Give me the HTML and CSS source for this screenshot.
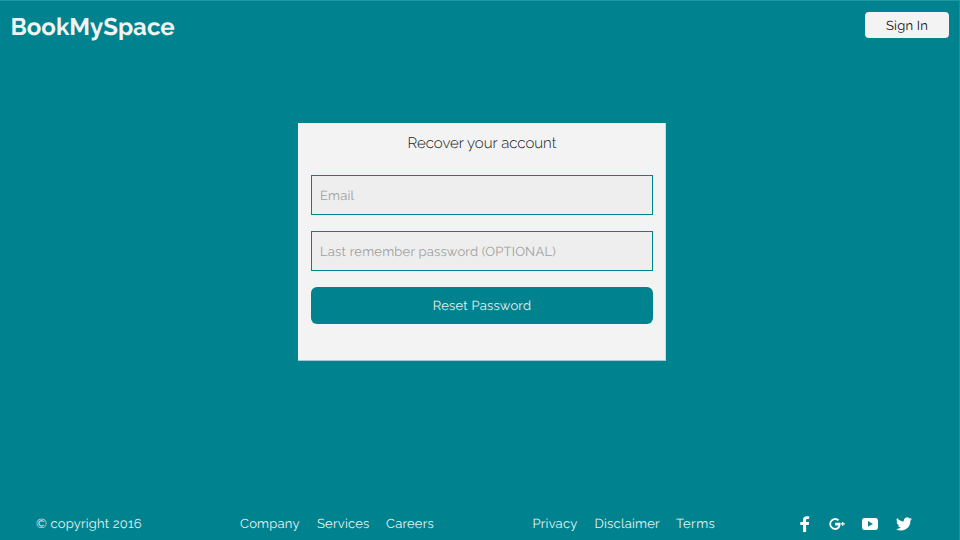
FILE: index.html
```html
<!DOCTYPE html>
<html lang="en">
<head>
<meta charset="utf-8">
<title>BookMySpace</title>
<link rel="stylesheet" href="styles.css">
</head>
<body>
<header class="header">
  <a class="brand">BookMySpace</a>
  <button class="sign-in">Sign In</button>
</header>
<main class="main">
  <form class="card">
    <h1 class="title">Recover your account</h1>
    <input class="field email" type="email" placeholder="Email">
    <input class="field password" type="text" placeholder="Last remember password (OPTIONAL)">
    <button class="reset" type="button">Reset Password</button>
  </form>
</main>
<footer class="footer">
  <span class="copyright">© copyright 2016</span>
  <nav class="links company-links"><a class="company">Company</a><a class="services">Services</a><a class="careers">Careers</a></nav>
  <nav class="links legal-links"><a class="privacy">Privacy</a><a class="disclaimer">Disclaimer</a><a class="terms">Terms</a></nav>
  <div class="social">
    <svg class="facebook" width="10" height="16" viewBox="0 0 10 16"><path d="M3 16V9H.3V6H3V4C3 1.400 4.500.3 6.800.3h2.400V3H7.600C6.400 3 6.100 3.500 6.100 4.400V6h3l-.4 3H6.100v7z"/></svg>
    <svg class="google" width="17" height="14" viewBox="0 0 17 14"><path d="M6.200 5.800h5.200c.7 4-1.500 7.100-5.200 7.100a5.900 5.900 0 1 1 4-10.300L8.900 3.900A4.100 4.100 0 1 0 6.200 11.100c1.700 0 2.900-.9 3.300-2.500H6.200zM13.100 5H14.300V6.200H15.800v1.200H14.300v1.300H13.100V7.400H11.900V6.200h1.200z"/></svg>
    <svg class="youtube" width="16" height="12" viewBox="0 0 16 12"><path fill-rule="evenodd" d="M2.500.1Q8-.2 13.500.1q2.200.2 2.400 2 .3 3.900 0 7.800-.2 1.800-2.400 2Q8 12.200 2.500 11.900q-2.200-.2-2.400-2-.3-3.900 0-7.800.2-1.800 2.400-2zM6 3.100v5.500L11 5.900z"/></svg>
    <svg class="twitter" width="16" height="14" viewBox="0 0 24 20"><path d="M24 2.400a10 10 0 0 1-2.800.8A5 5 0 0 0 23.300.5a10 10 0 0 1-3.100 1.200A4.900 4.900 0 0 0 11.800 6.200 14 14 0 0 1 1.700 1a4.900 4.900 0 0 0 1.500 6.600A5 5 0 0 1 1 7a4.900 4.900 0 0 0 3.900 4.900 5 5 0 0 1-2.200.1 4.900 4.900 0 0 0 4.600 3.400A10 10 0 0 1 0 17.500 14 14 0 0 0 21.500 5z"/></svg>
  </div>
</footer>
</body>
</html>
```

FILE: styles.css
```css
* { box-sizing: border-box; }
body {
  margin: 0;
  height: 540px;
  display: flex;
  flex-direction: column;
  overflow: hidden;
  background: #00838f;
  border-top: 1px solid #2196a0;
  border-right: 1px solid #1b909b;
  font: 400 13px/20px Raleway, Lato, sans-serif;
  letter-spacing: .22px;
  text-rendering: geometricPrecision;
  color: #e3f1f2;
}
button, input { font: inherit; letter-spacing: inherit; text-rendering: inherit; }
.header {
  display: flex;
  justify-content: space-between;
  align-items: flex-start;
  height: 122px;
  padding: 11px 10px 0 10.500px;
}
.brand { font-size: 24px; font-weight: 700; line-height: 30px; letter-spacing: 0; color: #f3f3f3; }
.sign-in {
  width: 84px;
  height: 26px;
  padding: 3px 0 0;
  border: 0;
  border-radius: 4px;
  background: #f3f3f3;
  color: #111;
}
.main { flex: 1; padding-left: 298px; }
.card {
  display: flex;
  flex-direction: column;
  width: 368px;
  height: 238px;
  padding: 10px 12px 0 13px;
  background: #f3f3f3;
  border-right: 1px solid #c5dde0;
  border-bottom: 1px solid #a0cdd1;
}
.title {
  margin: 0 0 22px;
  font-size: 15px;
  line-height: 20px;
  font-weight: 300;
  letter-spacing: 0;
  text-align: center;
  color: #181818;
}
.field {
  width: 342px;
  height: 40px;
  margin: 0 0 16px;
  padding: 2px 8px 0;
  border: 1px solid #00838f;
  border-radius: 0;
  background: #eee;
}
.field::placeholder { color: #a0a0a0; opacity: 1; }
.reset {
  height: 37px;
  padding: 2px 0 0;
  border: 0;
  border-radius: 6px;
  background: #00838f;
  color: #e3f1f2;
}
.footer { display: flex; height: 27px; align-items: flex-start; padding-left: 36px; white-space: nowrap; }
.copyright, .links { padding-top: 2px; }
.copyright { width: 204px; letter-spacing: .2px; }
.links { display: flex; }
.company-links { width: 292.500px; }
.legal-links { width: 267px; }
.company { width: 77px; }
.services { width: 69px; }
.privacy { width: 62px; }
.disclaimer { width: 81.500px; }
.terms { letter-spacing: .5px; }
.social { display: flex; align-items: center; padding-top: 3px; }
.social svg { fill: #fff; }
.google { margin-left: 19px; }
.youtube { margin-left: 16px; }
.twitter { margin-left: 18px; }
```
